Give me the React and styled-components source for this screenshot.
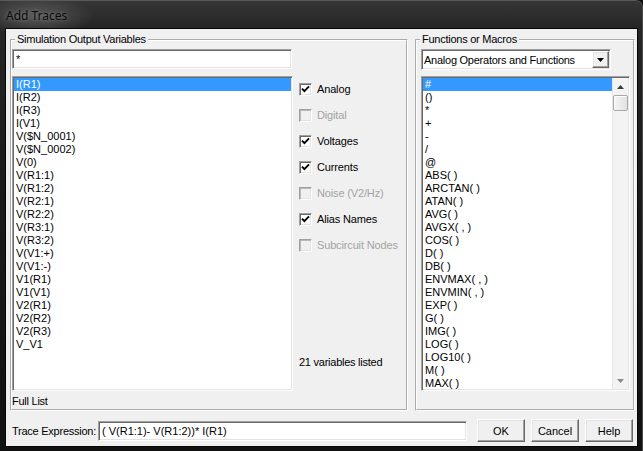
import styled, { createGlobalStyle, css } from "styled-components";

const GlobalStyle = createGlobalStyle`
  html, body {
    margin: 0;
    padding: 0;
    background: #0d0d0d;
  }
  body {
    font-family: "Liberation Sans", Arial, sans-serif;
    font-size: 11px;
    color: #000;
  }
`;

const sunken = css`
  box-sizing: border-box;
  border: 1px solid;
  border-color: #a0a0a0 #ffffff #ffffff #a0a0a0;
  box-shadow: inset 1px 1px 0 #696969, inset -1px -1px 0 #e3e3e3;
  padding: 1px;
  background: #fff;
`;

const raised = css`
  box-sizing: border-box;
  border: 1px solid;
  border-color: #ffffff #696969 #696969 #ffffff;
  box-shadow: inset -1px -1px 0 #a0a0a0, inset 1px 1px 0 #e3e3e3;
  background: #f0f0f0;
`;

const tight = css`
  letter-spacing: -0.25px;
  white-space: nowrap;
`;

const Window = styled.div`
  width: 643px;
  height: 451px;
  box-sizing: border-box;
  display: flex;
  flex-direction: column;
  padding: 0 6px 5px 6px;
  background:
    radial-gradient(ellipse 58px 20px at 36px 16px, rgba(120, 120, 120, 0.6), rgba(0, 0, 0, 0) 100%),
    linear-gradient(180deg, #363636 0%, #262626 6%, #1a1a1a 40%, #111 100%);
  border-top-right-radius: 7px;
  box-shadow: inset -1px 0 0 #4a4a4a, inset 0 1px 0 #5a5a5a;
  overflow: hidden;
`;

const TitleBar = styled.div`
  height: 29px;
  display: flex;
  align-items: center;
  padding-top: 2px;
  box-sizing: border-box;
`;

const Title = styled.span`
  font-family: "Noto Sans", "Open Sans", sans-serif;
  font-size: 12px;
  color: #0a0a0a;
  text-shadow: 0 0 4px rgba(190, 190, 190, 0.5);
`;

const Client = styled.div`
  width: 631px;
  height: 417px;
  box-sizing: border-box;
  background: #f0f0f0;
  display: flex;
  flex-direction: column;
  padding: 4px 2px 0 4px;
  box-shadow: 0 0 0 1px #050505;
`;

const Groups = styled.div`
  display: flex;
  gap: 7px;
  align-items: flex-start;
`;

const GroupBox = styled.fieldset`
  margin: 0;
  padding: 0;
  min-width: 0;
  width: ${({ $width }) => $width}px;
  box-sizing: border-box;
  border: 2px groove #fff;
`;

const Legend = styled.legend`
  ${tight};
  margin-left: 3px;
  padding: 0 2px;
  font-size: 11px;
  line-height: 13px;
`;

const LeftBody = styled.div`
  display: flex;
  height: 363px;
  box-sizing: border-box;
  padding: 3px 0 1px 0;
`;

const VarColumn = styled.div`
  width: 281px;
  flex-shrink: 0;
  display: flex;
  flex-direction: column;
`;

const TextInput = styled.div`
  ${sunken};
  width: ${({ $width }) => $width}px;
  flex-shrink: 0;
  height: 20px;
  line-height: 16px;
  padding-left: 3px;
  white-space: nowrap;
  overflow: hidden;
`;

const ListBox = styled.div`
  ${sunken};
  width: ${({ $width }) => $width}px;
  height: 315px;
  margin-top: ${({ $top }) => $top}px;
  display: flex;
  overflow: hidden;
`;

const Items = styled.div`
  flex: 1;
  min-width: 0;
  overflow: hidden;
`;

const Item = styled.div`
  height: 13px;
  line-height: 13px;
  padding-left: 2px;
  white-space: nowrap;
  background: ${({ $selected }) => ($selected ? "#3399ff" : "transparent")};
  color: ${({ $selected }) => ($selected ? "#fff" : "#000")};
`;

const Caption = styled.div`
  ${tight};
  line-height: 13px;
  margin-top: ${({ $top }) => $top || 0}px;
`;

const Options = styled.div`
  margin-left: 6px;
  padding-top: 27px;
  display: flex;
  flex-direction: column;
`;

const OptionRow = styled.div`
  height: 26px;
  display: flex;
  align-items: center;
  gap: 5px;
  letter-spacing: -0.15px;
  color: ${({ $disabled }) => ($disabled ? "#a3a3a3" : "#000")};
  white-space: nowrap;
`;

const Box = styled.span`
  width: 13px;
  height: 13px;
  box-sizing: border-box;
  border: 1px solid;
  border-color: #a0a0a0 #ffffff #ffffff #a0a0a0;
  box-shadow: inset 1px 1px 0 ${({ $disabled }) => ($disabled ? "#b8b8b8" : "#696969")},
    inset -1px -1px 0 #e3e3e3;
  background: ${({ $disabled }) => ($disabled ? "#f0f0f0" : "#fff")};
  display: flex;
  align-items: center;
  justify-content: center;
`;

const RightBody = styled.div`
  height: 363px;
  box-sizing: border-box;
  padding: 3px 3px 0 4px;
`;

const Dropdown = styled.div`
  ${sunken};
  width: 190px;
  height: 21px;
  display: flex;
  align-items: center;
  justify-content: space-between;
  padding-left: 2px;
`;

const DropText = styled.span`
  ${tight};
`;

const DropButton = styled.span`
  ${raised};
  width: 17px;
  height: 17px;
  display: flex;
  align-items: center;
  justify-content: center;
`;

const Scrollbar = styled.div`
  width: 16px;
  display: flex;
  flex-direction: column;
  background: #f3f3f3;
  box-shadow: inset 1px 0 0 #e6e6e6;
`;

const ScrollArrow = styled.div`
  height: 17px;
  display: flex;
  align-items: center;
  justify-content: center;
`;

const Thumb = styled.div`
  height: 16px;
  margin: 0 0 0 1px;
  box-sizing: border-box;
  border: 1px solid #a8a8a8;
  border-radius: 2px;
  background: linear-gradient(90deg, #f4f4f4, #e2e2e2);
  box-shadow: inset 1px 1px 0 #fff;
`;

const Track = styled.div`
  flex: 1;
`;

const BottomRow = styled.div`
  display: flex;
  align-items: center;
  height: 35px;
  box-sizing: border-box;
  padding: 8px 0 4px 2px;
`;

const TraceLabel = styled.span`
  ${tight};
  width: 86px;
  flex-shrink: 0;
`;

const Buttons = styled.div`
  display: flex;
  gap: 6px;
  margin-left: 10px;
`;

const Button = styled.button`
  ${raised};
  width: 48px;
  height: 23px;
  flex-shrink: 0;
  padding: 0;
  font-family: "Liberation Sans", Arial, sans-serif;
  font-size: 11px;
  color: #000;
`;

const variables = [
  "I(R1)", "I(R2)", "I(R3)", "I(V1)", "V($N_0001)", "V($N_0002)", "V(0)",
  "V(R1:1)", "V(R1:2)", "V(R2:1)", "V(R2:2)", "V(R3:1)", "V(R3:2)",
  "V(V1:+)", "V(V1:-)", "V1(R1)", "V1(V1)", "V2(R1)", "V2(R2)", "V2(R3)", "V_V1",
];

const functions = [
  "#", "()", "*", "+", "-", "/", "@", "ABS( )", "ARCTAN( )", "ATAN( )",
  "AVG( )", "AVGX( , )", "COS( )", "D( )", "DB( )", "ENVMAX( , )",
  "ENVMIN( , )", "EXP( )", "G( )", "IMG( )", "LOG( )", "LOG10( )", "M( )", "MAX( )",
];

const options = [
  { label: "Analog", checked: true },
  { label: "Digital", disabled: true },
  { label: "Voltages", checked: true },
  { label: "Currents", checked: true },
  { label: "Noise (V2/Hz)", disabled: true },
  { label: "Alias Names", checked: true },
  { label: "Subcircuit Nodes", disabled: true },
];

const Check = () => (
  <svg width="9" height="9" viewBox="0 0 9 9">
    <path d="M1 3.6 L3.4 6.2 L8 1.4" fill="none" stroke="#000" strokeWidth="1.9" />
  </svg>
);

const Arrow = ({ down, color = "#000", w = 7, h = 4 }) => (
  <svg width={w} height={h} viewBox={`0 0 ${w} ${h}`}>
    <polygon
      points={down ? `0,0 ${w},0 ${w / 2},${h}` : `0,${h} ${w},${h} ${w / 2},0`}
      fill={color}
    />
  </svg>
);

export default function App() {
  return (
    <>
      <GlobalStyle />
      <Window>
        <TitleBar>
          <Title>Add Traces</Title>
        </TitleBar>
        <Client>
          <Groups>
            <GroupBox $width={398}>
              <Legend>Simulation Output Variables</Legend>
              <LeftBody>
                <VarColumn>
                  <TextInput $width={280}>*</TextInput>
                  <ListBox $width={281} $top={7}>
                    <Items>
                      {variables.map((v, i) => (
                        <Item key={v} $selected={i === 0}>{v}</Item>
                      ))}
                    </Items>
                  </ListBox>
                  <Caption $top={4}>Full List</Caption>
                </VarColumn>
                <Options>
                  {options.map((o) => (
                    <OptionRow key={o.label} $disabled={o.disabled}>
                      <Box $disabled={o.disabled}>{o.checked && <Check />}</Box>
                      {o.label}
                    </OptionRow>
                  ))}
                  <Caption $top={98}>21 variables listed</Caption>
                </Options>
              </LeftBody>
            </GroupBox>
            <GroupBox $width={220}>
              <Legend>Functions or Macros</Legend>
              <RightBody>
                <Dropdown>
                  <DropText>Analog Operators and Functions</DropText>
                  <DropButton>
                    <Arrow down />
                  </DropButton>
                </Dropdown>
                <ListBox $width={209} $top={6}>
                  <Items>
                    {functions.map((f, i) => (
                      <Item key={f} $selected={i === 0}>{f}</Item>
                    ))}
                  </Items>
                  <Scrollbar>
                    <ScrollArrow>
                      <Arrow color="#3c3c3c" />
                    </ScrollArrow>
                    <Thumb />
                    <Track />
                    <ScrollArrow>
                      <Arrow down color="#8a8a8a" />
                    </ScrollArrow>
                  </Scrollbar>
                </ListBox>
              </RightBody>
            </GroupBox>
          </Groups>
          <BottomRow>
            <TraceLabel>Trace Expression:</TraceLabel>
            <TextInput $width={369}>( V(R1:1)- V(R1:2))* I(R1)</TextInput>
            <Buttons>
              <Button>OK</Button>
              <Button>Cancel</Button>
              <Button>Help</Button>
            </Buttons>
          </BottomRow>
        </Client>
      </Window>
    </>
  );
}
